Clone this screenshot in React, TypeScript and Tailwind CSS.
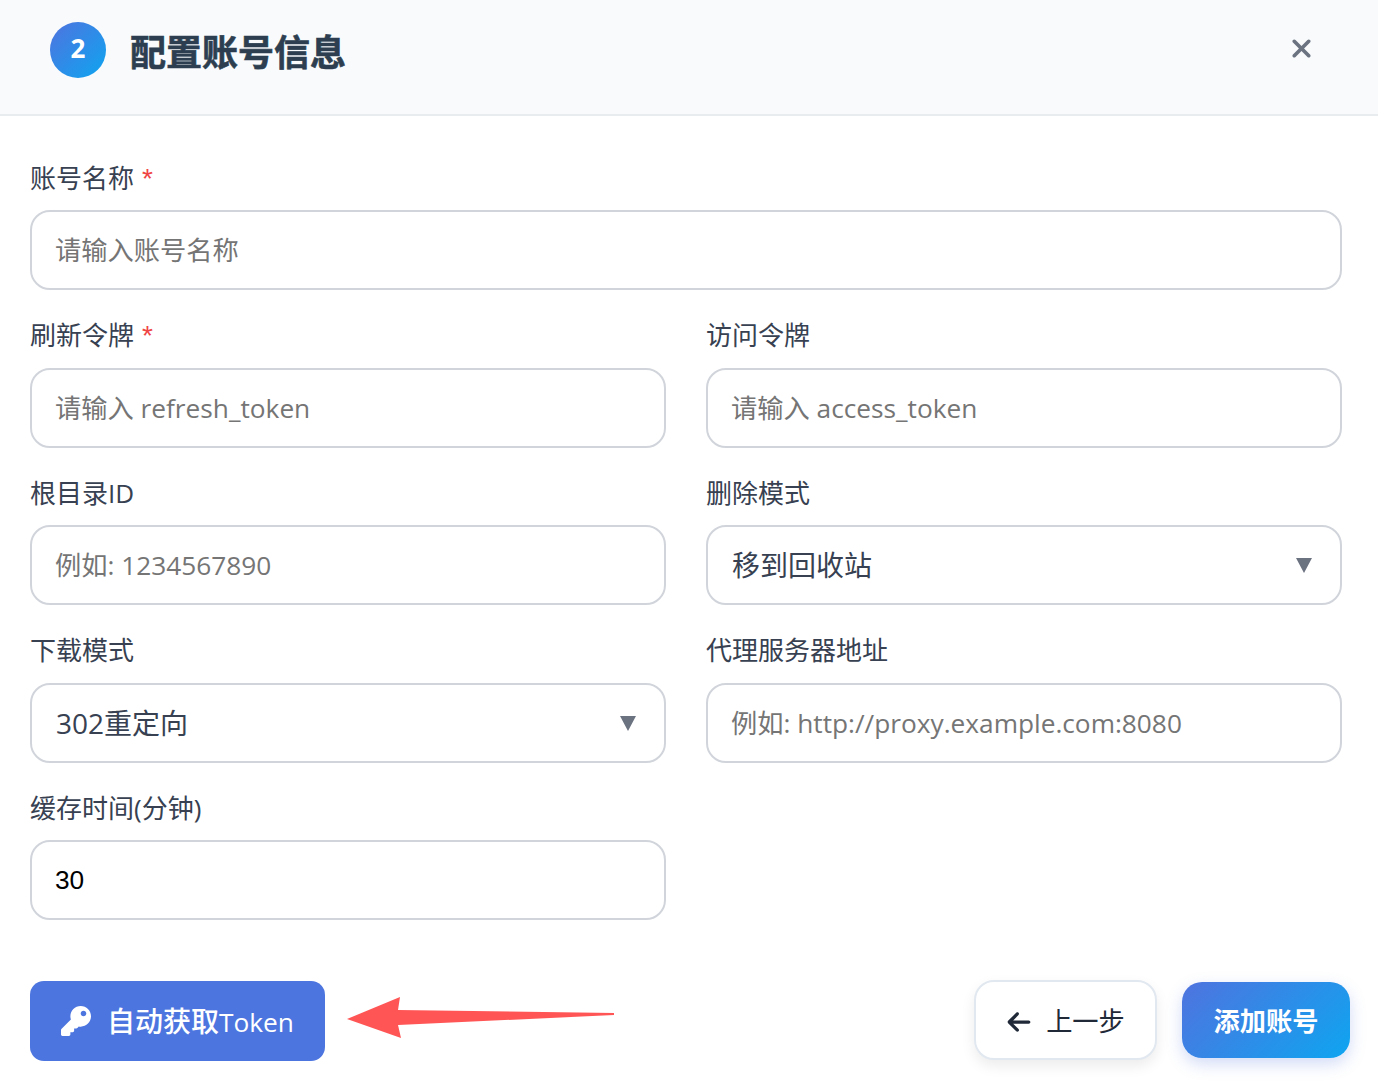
import { FaKey } from "react-icons/fa";
import { FaArrowLeft, FaXmark } from "react-icons/fa6";

const fontStack = "font-['Open_Sans','Noto_Sans_CJK_SC',sans-serif]";
const inputCls =
  "h-[80px] w-full rounded-[20px] border-2 border-[#d1d5db] bg-white px-[23px] text-[26.25px] text-black outline-none placeholder:text-[#757575]";

function Label({ text, required }: { text: string; required?: boolean }) {
  return (
    <label className="mb-[15.5px] block h-[32px] text-[26px] leading-[31px] text-[#374151]">
      {text}
      {required && <span className="ml-[8px] font-['Liberation_Sans',sans-serif] text-[28px] text-[#ef4444]">*</span>}
    </label>
  );
}

function TextField({
  label,
  placeholder,
  required,
  wide,
}: {
  label: string;
  placeholder: string;
  required?: boolean;
  wide?: boolean;
}) {
  return (
    <div className={wide ? "col-span-2" : ""}>
      <Label text={label} required={required} />
      <input type="text" placeholder={placeholder} className={inputCls} />
    </div>
  );
}

function SelectField({ label, value }: { label: string; value: string }) {
  return (
    <div>
      <Label text={label} />
      <div className="relative">
        <select
          defaultValue={value}
          className="h-[80px] w-full appearance-none rounded-[20px] border-2 border-[#d1d5db] bg-white px-[24px] text-[28px] text-[#374151] outline-none"
        >
          <option>{value}</option>
        </select>
        <svg
          viewBox="0 0 16 15"
          className="pointer-events-none absolute right-[30px] top-[33px] h-[15px] w-[16px] fill-[#6b7280]"
        >
          <path d="M0 0h16L8 15z" />
        </svg>
      </div>
    </div>
  );
}

export default function App() {
  return (
    <div className={`relative h-[1086px] w-[1378px] overflow-hidden bg-white ${fontStack}`}>
      <header className="flex h-[116px] items-center justify-between border-b-2 border-[#e9ecef] bg-[#f8fafc] pb-[14px] pl-[50px] pr-[62px]">
        <div className="flex items-center gap-[24px]">
          <div className="flex h-[56px] w-[56px] items-center justify-center rounded-full bg-[linear-gradient(135deg,#4f73df,#0ea5f0)] pb-[3px] text-[26px] font-bold text-white">
            2
          </div>
          <h2 className="mt-[6px] text-[36px] font-bold text-[#2c3e50] [-webkit-text-stroke:0.6px_#2c3e50]">
            配置账号信息
          </h2>
        </div>
        <button className="mb-[4px] text-[#6b7280]">
          <FaXmark className="h-[29px] w-[29px]" />
        </button>
      </header>

      <form className="grid grid-cols-2 gap-x-[40px] gap-y-[30px] pl-[30px] pr-[36px] pt-[46.5px]">
        <TextField label="账号名称" placeholder="请输入账号名称" required wide />
        <TextField label="刷新令牌" placeholder="请输入 refresh_token" required />
        <TextField label="访问令牌" placeholder="请输入 access_token" />
        <TextField label="根目录ID" placeholder="例如: 1234567890" />
        <SelectField label="删除模式" value="移到回收站" />
        <SelectField label="下载模式" value="302重定向" />
        <TextField label="代理服务器地址" placeholder="例如: http://proxy.example.com:8080" />
        <div>
          <Label text="缓存时间(分钟)" />
          <input
            type="number"
            defaultValue={30}
            className={`${inputCls} font-['Liberation_Sans',sans-serif]`}
          />
        </div>
      </form>

      <footer className="mt-[59px] flex items-center justify-between pl-[30px] pr-[28px]">
        <button className="mt-[2px] flex h-[80px] w-[295px] items-center justify-center gap-[16px] rounded-[14px] bg-[#4c75df] text-[28px] font-medium text-white">
          <FaKey className="h-[30px] w-[30px]" />
          <span>
            自动获取<span className="text-[26.25px]">Token</span>
          </span>
        </button>
        <div className="flex items-center gap-[25px]">
          <button className="flex h-[80px] w-[183px] items-center justify-center gap-[14px] rounded-[20px] border-2 border-[#e2e8f0] bg-white pt-[3px] text-[26.25px] text-[#1f2937] shadow-[0_6px_14px_rgba(0,0,0,0.08)]">
            <FaArrowLeft className="h-[26px] w-[26px]" />
            上一步
          </button>
          <button className="flex h-[76px] w-[168px] items-center justify-center rounded-[20px] bg-[linear-gradient(135deg,#4f73df,#0ea5f0)] pt-[4px] text-[26.25px] font-semibold text-white shadow-[0_6px_16px_rgba(79,115,223,0.25)]">
            添加账号
          </button>
        </div>
      </footer>

      {/* red annotation arrow over the page */}
      <svg viewBox="0 0 1378 1086" className="pointer-events-none absolute left-0 top-0 h-[1086px] w-[1378px]">
        <path d="M347 1019 400 997 398 1010 614 1013 614 1015 398 1025 401 1038Z" fill="#ff5555" />
      </svg>
    </div>
  );
}
